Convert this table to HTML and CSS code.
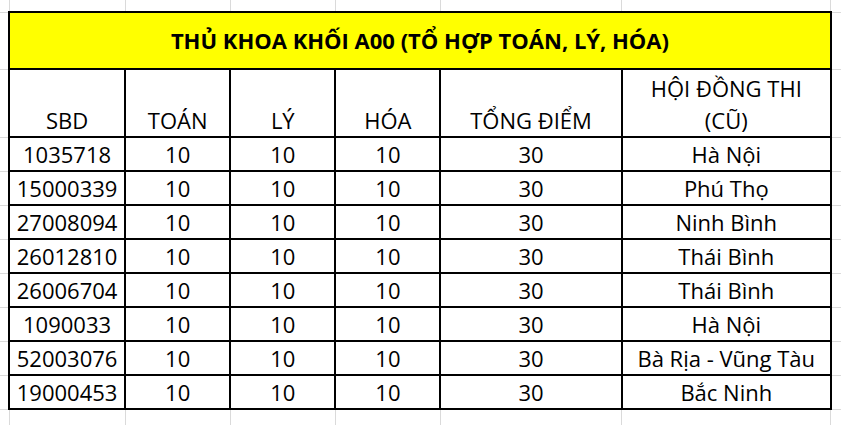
FILE: index.html
```html
<!DOCTYPE html>
<html lang="vi">
<head>
<meta charset="utf-8">
<title>Thủ khoa khối A00</title>
<link rel="stylesheet" href="styles.css">
</head>
<body>
<table class="sheet">
  <colgroup>
    <col class="c-pad-l">
    <col class="c-sbd">
    <col class="c-sub">
    <col class="c-sub">
    <col class="c-sub">
    <col class="c-total">
    <col class="c-place">
    <col class="c-pad-r">
  </colgroup>
  <tr class="r-pad-top">
    <td class="pad"></td><td class="pad"></td><td class="pad"></td><td class="pad"></td><td class="pad"></td><td class="pad"></td><td class="pad"></td><td class="pad"></td>
  </tr>
  <tr class="r-title">
    <td class="pad"></td>
    <td class="title" colspan="6">THỦ KHOA KHỐI A00 (TỔ HỢP TOÁN, LÝ, HÓA)</td>
    <td class="pad"></td>
  </tr>
  <tr class="r-head">
    <td class="pad"></td>
    <td class="head">SBD</td>
    <td class="head">TOÁN</td>
    <td class="head">LÝ</td>
    <td class="head">HÓA</td>
    <td class="head">TỔNG ĐIỂM</td>
    <td class="head">HỘI ĐỒNG THI<br>(CŨ)</td>
    <td class="pad"></td>
  </tr>
  <tr class="r-data"><td class="pad"></td><td class="cell">1035718</td><td class="cell">10</td><td class="cell">10</td><td class="cell">10</td><td class="cell">30</td><td class="cell">Hà Nội</td><td class="pad"></td></tr>
  <tr class="r-data"><td class="pad"></td><td class="cell">15000339</td><td class="cell">10</td><td class="cell">10</td><td class="cell">10</td><td class="cell">30</td><td class="cell">Phú Thọ</td><td class="pad"></td></tr>
  <tr class="r-data"><td class="pad"></td><td class="cell">27008094</td><td class="cell">10</td><td class="cell">10</td><td class="cell">10</td><td class="cell">30</td><td class="cell">Ninh Bình</td><td class="pad"></td></tr>
  <tr class="r-data"><td class="pad"></td><td class="cell">26012810</td><td class="cell">10</td><td class="cell">10</td><td class="cell">10</td><td class="cell">30</td><td class="cell">Thái Bình</td><td class="pad"></td></tr>
  <tr class="r-data"><td class="pad"></td><td class="cell">26006704</td><td class="cell">10</td><td class="cell">10</td><td class="cell">10</td><td class="cell">30</td><td class="cell">Thái Bình</td><td class="pad"></td></tr>
  <tr class="r-data"><td class="pad"></td><td class="cell">1090033</td><td class="cell">10</td><td class="cell">10</td><td class="cell">10</td><td class="cell">30</td><td class="cell">Hà Nội</td><td class="pad"></td></tr>
  <tr class="r-data"><td class="pad"></td><td class="cell">52003076</td><td class="cell">10</td><td class="cell">10</td><td class="cell">10</td><td class="cell">30</td><td class="cell">Bà Rịa - Vũng Tàu</td><td class="pad"></td></tr>
  <tr class="r-data"><td class="pad"></td><td class="cell">19000453</td><td class="cell">10</td><td class="cell">10</td><td class="cell">10</td><td class="cell">30</td><td class="cell">Bắc Ninh</td><td class="pad"></td></tr>
  <tr class="r-pad-bot">
    <td class="pad"></td><td class="pad"></td><td class="pad"></td><td class="pad"></td><td class="pad"></td><td class="pad"></td><td class="pad"></td><td class="pad"></td>
  </tr>
</table>
</body>
</html>
```

FILE: styles.css
```css
html, body {
  margin: 0;
  padding: 0;
  background: #ffffff;
  overflow: hidden;
}

.sheet {
  border-collapse: collapse;
  table-layout: fixed;
  width: 842px;
  font-family: "Open Sans", "Noto Sans", sans-serif;
  font-size: 22px;
  color: #000000;
}

.c-pad-l { width: 9px; }
.c-sbd { width: 116px; }
.c-sub { width: 105px; }
.c-total { width: 181px; }
.c-place { width: 209px; }
.c-pad-r { width: 11px; }

.sheet td {
  padding: 0;
  text-align: center;
  white-space: nowrap;
}

.pad {
  border: 1px solid #dadada;
}

.r-pad-top td { border-top: none; height: 11px; }
.r-pad-bot td { border-bottom: none; height: 15px; }
.sheet tr td:first-child { border-left: none; }
.sheet tr td:last-child { border-right: none; }

.r-title td { height: 55px; }
.r-head td { height: 66px; }
.r-data td { height: 32px; }

.title,
.head,
.cell {
  border: 2px solid #000000;
}

.title {
  background: #ffff00;
  font-weight: 700;
  line-height: 1.2;
  vertical-align: middle;
  padding-top: 2px;
}

.head {
  line-height: 32px;
  vertical-align: bottom;
}

.cell {
  line-height: 1.2;
  vertical-align: middle;
  padding-top: 4px;
}
```
